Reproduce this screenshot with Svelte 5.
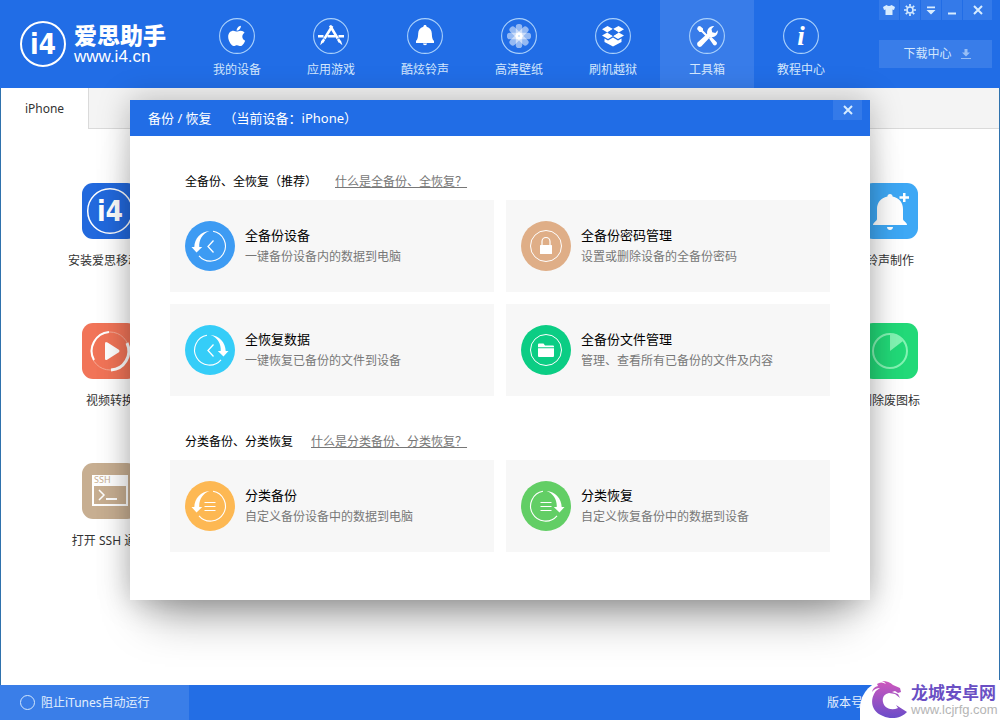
<script lang="ts">
	interface NavItem {
		id: string;
		label: string;
	}

	interface Action {
		icon: string;
		color: string;
		title: string;
		text: string;
	}

	interface Section {
		title: string;
		help: string;
		actions: Action[];
	}

	const nav: NavItem[] = [
		{ id: 'device', label: '我的设备' },
		{ id: 'apps', label: '应用游戏' },
		{ id: 'ringtones', label: '酷炫铃声' },
		{ id: 'wallpaper', label: '高清壁纸' },
		{ id: 'flash', label: '刷机越狱' },
		{ id: 'toolbox', label: '工具箱' },
		{ id: 'guide', label: '教程中心' }
	];

	const tools = [
		{ id: 'install', label: '安装爱思移动端', side: 'first' },
		{ id: 'ringtone', label: '铃声制作', side: 'last' },
		{ id: 'video', label: '视频转换', side: 'first' },
		{ id: 'clean', label: '删除废图标', side: 'last' },
		{ id: 'ssh', label: '打开 SSH 通道', side: 'first' }
	];

	const sections: Section[] = [
		{
			title: '全备份、全恢复（推荐）',
			help: '什么是全备份、全恢复？',
			actions: [
				{ icon: 'backup', color: '#3d9bf3', title: '全备份设备', text: '一键备份设备内的数据到电脑' },
				{ icon: 'lock', color: '#dfae87', title: '全备份密码管理', text: '设置或删除设备的全备份密码' },
				{ icon: 'restore', color: '#35cdf8', title: '全恢复数据', text: '一键恢复已备份的文件到设备' },
				{ icon: 'folder', color: '#0bcd84', title: '全备份文件管理', text: '管理、查看所有已备份的文件及内容' }
			]
		},
		{
			title: '分类备份、分类恢复',
			help: '什么是分类备份、分类恢复？',
			actions: [
				{ icon: 'backup-list', color: '#fdb853', title: '分类备份', text: '自定义备份设备中的数据到电脑' },
				{ icon: 'restore-list', color: '#62ce65', title: '分类恢复', text: '自定义恢复备份中的数据到设备' }
			]
		}
	];

	let active = $state('toolbox');
	let open = $state(true);
	let blockItunes = $state(false);
</script>

{#snippet navIcon(id: string)}
	<svg class="nav-icon" viewBox="0 0 36 36" aria-hidden="true">
		<circle cx="18" cy="18" r="17.4" fill="none" stroke="#a9d0fb" stroke-width="1.1" />
		{#if id === 'device'}
			<path
				transform="translate(9 6.4) scale(.045)"
				d="M318.7 268.7c-.2-36.7 16.4-64.4 50-84.8-18.8-26.9-47.2-41.7-84.7-44.6-35.5-2.8-74.3 20.7-88.5 20.7-15 0-49.4-19.7-76.4-19.7C63.3 141.2 4 184.8 4 273.5q0 39.3 14.4 81.2c12.8 36.7 59 126.7 107.2 125.2 25.2-.6 43-17.9 75.8-17.9 31.8 0 48.3 17.9 76.4 17.9 48.6-.7 90.4-82.5 102.6-119.3-65.2-30.7-61.7-90-61.7-91.9zm-56.6-164.2c27.3-32.4 24.8-61.9 24-72.5-24.1 1.4-52 16.4-67.9 34.9-17.5 19.8-27.8 44.3-25.6 71.9 26.1 2 49.9-11.4 69.5-34.3z"
			/>
		{:else if id === 'apps'}
			<path d="M5 17h5.5v2.4H5zM14.5 17h8v2.4h-8zM25.5 17H31v2.4h-5.5z" />
			<path d="M19.3 8 9.4 24M17 7.5 26.8 24" fill="none" stroke="#fff" stroke-width="2.5" />
			<path d="m8.3 22.5 2.4 1.5-3.5 3.3zM25.6 24l2.3-1.4 1.5 4.6z" />
			<path d="m10.5 20.5 2.6 1.6M23.2 21.7l2.6-1.5" stroke="#216de6" stroke-width=".8" />
		{:else if id === 'ringtones'}
			<path
				d="M18 7c1 0 1.6.7 1.6 1.700 3.500.8 5 3.400 5.200 6.600.2 4.300.6 6 2.200 7.700v2H9v-2c1.600-1.700 2-3.400 2.200-7.700.2-3.200 1.700-5.800 5.200-6.600C16.400 7.700 17 7 18 7zM16 25.500h4c0 1-.9 1.700-2 1.700s-2-.7-2-1.700z"
			/>
		{:else if id === 'wallpaper'}
			{#each [0, 45, 90, 135, 180, 225, 270, 315] as angle}
				<rect
					x="14.8"
					y="6"
					width="6.4"
					height="12"
					rx="2.8"
					fill-opacity=".52"
					transform="rotate({angle} 18 18)"
				/>
			{/each}
			<circle cx="18" cy="18" r="3.5" />
			<circle cx="18" cy="18" r=".8" fill="#9cc6f8" />
		{:else if id === 'flash'}
			<path
				d="m12.500 8 5.500 3-5.700 3.400L7 11.200zM23.500 8 18 11l5.700 3.400 5.300-3.200zM7 17.500l5.300-3 5.700 3.500-5 3zM29 17.500l-5.300-3L18 18l5 3zM9.500 20.500l3.500 2 5-3 5 3 3.500-2V24L18 28.500 9.500 24z"
			/>
			<path d="M12.300 14.400 18 11l5.700 3.400L18 18z" fill="#216de6" />
		{:else if id === 'toolbox'}
			<path
				d="M9 8.500 11 8l3 2.500v2l5 5-1.500 1.500-5-5h-2L8 11zM20 20.500l2-2 5.500 5.500c1.500 2-1 4.500-3 3z"
			/>
			<path
				d="m8.500 24.500 9.700-8.700c-.8-4 2.300-8.300 7-7.800l-2.700 3 .7 3.200 3.200.7 2.300-2.700c.8 4.500-3.400 7.800-7.500 6.800l-9 9.500c-2.500 1.500-5-1.500-3.700-4z"
			/>
		{:else}
			<text x="18" y="27" text-anchor="middle" class="info">i</text>
		{/if}
	</svg>
{/snippet}

{#snippet toolIcon(id: string)}
	{#if id === 'install'}
		<svg class="tool-icon" viewBox="0 0 56 56" aria-hidden="true">
			<rect width="56" height="56" rx="11" fill="#2269dd" />
			<circle cx="28" cy="28" r="22.3" fill="none" stroke="#fff" stroke-width="1.5" />
			<text x="28" y="38" text-anchor="middle" class="mark">i4</text>
		</svg>
	{:else if id === 'ringtone'}
		<svg class="tool-icon" viewBox="0 0 56 56" aria-hidden="true">
			<rect width="56" height="56" rx="11" fill="#3ea8f5" />
			<path
				d="M28 11c1.600 0 2.500 1 2.600 2.600C37.500 15 41 20 41 26v10c0 2 4 3.500 4 6H11c0-2.500 4-4 4-6V26c0-6 3.500-11 10.400-12.400C25.500 12 26.400 11 28 11zM25 44h6c0 4-6 4-6 0zM41 10h2.500v3.200H47v2.600h-3.500V19H41v-3.200h-3.500v-2.600H41z"
				fill="#fff"
			/>
		</svg>
	{:else if id === 'video'}
		<svg class="tool-icon" viewBox="0 0 56 56" aria-hidden="true">
			<rect width="56" height="56" rx="11" fill="#f17458" />
			<circle cx="28" cy="28" r="19" fill="none" stroke="#f6a995" />
			<path d="M27 9a19 19 0 0 0-15 28" fill="none" stroke="#fff" stroke-width="2" />
			<path d="M29 47a19 19 0 0 0 16-27" fill="none" stroke="#fff" stroke-width="3" />
			<path d="M23 20.500q0-2.500 2.500-1l11 7q2 1.500 0 3l-11 7q-2.500 1.500-2.500-1z" fill="#fff" />
		</svg>
	{:else if id === 'clean'}
		<svg class="tool-icon" viewBox="0 0 56 56" aria-hidden="true">
			<rect width="56" height="56" rx="11" fill="#22d978" />
			<circle cx="28" cy="28" r="17" fill="none" stroke="#83f3b3" stroke-width="2" />
			<path d="M28 28V11q8 0 13 7z" fill="#83f3b3" />
		</svg>
	{:else}
		<svg class="tool-icon" viewBox="0 0 56 56" aria-hidden="true">
			<rect width="56" height="56" rx="11" fill="#c7ae91" />
			<path d="M11 22v20h34V22" fill="none" stroke="#fff" stroke-width="2" />
			<rect x="10" y="12" width="36" height="11" fill="#fff" />
			<text x="12" y="20" class="ssh">SSH</text>
			<path d="m17 27 5 5-5 5" fill="none" stroke="#fff" stroke-width="1.5" />
			<path d="M24 36h11" stroke="#fff" stroke-width="2" />
		</svg>
	{/if}
{/snippet}

{#snippet actionIcon(icon: string, color: string)}
	<svg class="action-icon" viewBox="0 0 50 50" aria-hidden="true">
		<circle cx="25" cy="25" r="25" fill={color} />
		{#if icon === 'lock' || icon === 'folder'}
			<circle cx="25" cy="25" r="15.5" fill="none" stroke="#fff" />
		{:else}
			<g transform={icon.startsWith('restore') ? 'translate(50 0) scale(-1 1)' : undefined}>
				<path d="M28 10.300a15 15 0 1 1-14 24.500" fill="none" stroke="#fff" stroke-width="1.1" />
				<path d="M24.500 10C16 10.500 9.500 17.500 9.300 26H6.500l5 5.500 5.700-5.500h-2.900c-.6-7 3.200-13.500 10.200-16z" fill="#fff" />
			</g>
		{/if}
		{#if icon === 'lock'}
			<rect x="19" y="24" width="12" height="9" rx=".5" fill="#fff" />
			<path d="M21 24v-3.500a4 4 0 0 1 8 0V24" fill="none" stroke="#fff" stroke-width="1.2" />
		{:else if icon === 'folder'}
			<path d="M17 19.500q0-1 1-1h4.500l1.500 2h8q1 0 1 1v.8H17zM17 23.300h16V31q0 1-1 1H18q-1 0-1-1z" fill="#fff" />
		{:else if icon.endsWith('list')}
			<path d="M19.500 21.500h11M19.500 25.500h11M19.500 29.500h11" stroke="#fff" />
		{:else}
			<path d="m28.500 19.500-5.500 6 5.500 6" fill="none" stroke="#fff" stroke-width="1.3" />
		{/if}
	</svg>
{/snippet}

<div class="app">
	<header class="topbar">
		<div class="brand">
			<svg class="logo" viewBox="0 0 46 46" aria-hidden="true">
				<circle cx="23" cy="23" r="22" fill="none" stroke="#fff" stroke-width="2" />
				<text x="23" y="33" text-anchor="middle" class="mark">i4</text>
			</svg>
			<div class="brand-text">
				<strong>爱思助手</strong>
				<span>www.i4.cn</span>
			</div>
		</div>

		<nav>
			{#each nav as item (item.id)}
				<button
					type="button"
					class="nav-item"
					class:active={active === item.id}
					onclick={() => (active = item.id)}
				>
					{@render navIcon(item.id)}
					<span>{item.label}</span>
				</button>
			{/each}
		</nav>

		<div class="window">
			<div class="controls">
				<button type="button" aria-label="皮肤">
					<svg viewBox="0 0 12 12"><path d="M3.500 1q2.500 2 5 0L12 3l-1 3-1.500-.5V11h-7V5.500L1 6 0 3z" /></svg>
				</button>
				<button type="button" aria-label="设置">
					<svg viewBox="0 0 12 12">
						<circle cx="6" cy="6" r="3" fill="none" stroke="#d7ecff" stroke-width="1.6" />
						<path
							d="M6 0v2.500M6 9.500V12M0 6h2.500M9.500 6H12M1.800 1.800l1.700 1.700M8.500 8.500l1.700 1.700M1.800 10.200l1.700-1.700M8.500 3.500l1.700-1.700"
							stroke="#d7ecff"
							stroke-width="1.7"
						/>
					</svg>
				</button>
				<button type="button" aria-label="菜单">
					<svg viewBox="0 0 12 12"><path d="M2 2.500h8v1.800H2zM1.500 6h9L6 10.500z" /></svg>
				</button>
				<button type="button" aria-label="最小化">
					<svg viewBox="0 0 12 12"><path d="M2 8.500h8v2H2z" /></svg>
				</button>
				<button type="button" class="wide" aria-label="关闭">
					<svg viewBox="0 0 12 12"><path d="m2 2 8 8M10 2l-8 8" stroke="#d7ecff" stroke-width="2" /></svg>
				</button>
			</div>
			<button type="button" class="download">
				下载中心
				<svg viewBox="0 0 12 12" aria-hidden="true"><path d="M4.500 1h3v3.500H10l-4 4-4-4h2.500zM1 10h10v1H1z" /></svg>
			</button>
		</div>
	</header>

	<main>
		<div class="tabs">
			<button type="button" class="tab">iPhone</button>
		</div>
		<div class="tools">
			{#each tools as tool (tool.id)}
				<button type="button" class="tool {tool.side}">
					{@render toolIcon(tool.id)}
					<span>{tool.label}</span>
				</button>
			{/each}
		</div>
	</main>

	<footer>
		<label>
			<input type="checkbox" bind:checked={blockItunes} />
			阻止iTunes自动运行
		</label>
		<span class="version">版本号</span>
	</footer>

	{#if open}
		<div class="overlay">
			<div class="dialog" role="dialog" aria-labelledby="dialog-title">
				<div class="dialog-head">
					<h1 id="dialog-title">
						<span>备份 / 恢复</span>
						<span>（当前设备：iPhone）</span>
					</h1>
					<button type="button" aria-label="关闭" onclick={() => (open = false)}>
						<svg viewBox="0 0 12 12"><path d="m2 2 8 8M10 2l-8 8" stroke="#d7ecff" stroke-width="2" /></svg>
					</button>
				</div>
				<div class="dialog-body">
					{#each sections as section (section.title)}
						<section>
							<div class="section-head">
								<h2>{section.title}</h2>
								<a href="#help">{section.help}</a>
							</div>
							<div class="cards">
								{#each section.actions as action (action.title)}
									<button type="button" class="card">
										{@render actionIcon(action.icon, action.color)}
										<span class="card-text">
											<span class="card-title">{action.title}</span>
											<span class="card-desc">{action.text}</span>
										</span>
									</button>
								{/each}
							</div>
						</section>
					{/each}
				</div>
			</div>
		</div>
	{/if}

	<div class="watermark">
		<svg viewBox="0 0 38 38" aria-hidden="true">
			<defs>
				<linearGradient id="dragon" x1="0" y1="0" x2="0" y2="1">
					<stop offset="0" stop-color="#cf58bd" />
					<stop offset="1" stop-color="#6a4cc9" />
				</linearGradient>
			</defs>
			<path
				d="M6 3q4-3 9 0-1-2-4-3 7 0 11 4l7 3 1 4-3 1-3-2-3 1 6 2 2 4-5-4-6-1c-5 1-7 5-6 9 1 6 8 9 15 6l-2-3 11 7c-5 6-16 8-24 4C1 31-1 21 3 13q2-4 6-6Q4 7 1 11 2 6 7 5z"
				fill="url(#dragon)"
			/>
		</svg>
		<div>
			<strong>龙城安卓网</strong>
			<span>www.lcjrfg.com</span>
		</div>
	</div>
</div>

<style>
	:global(body) {
		margin: 0;
		background: #fff;
	}

	.app {
		position: relative;
		display: flex;
		flex-direction: column;
		min-height: 100vh;
		overflow: hidden;
		color: #333;
		font: 12px/20px 'Noto Sans', 'Noto Sans CJK SC', sans-serif;
	}

	button {
		padding: 0;
		border: 0;
		color: inherit;
		background: none;
		font: inherit;
		cursor: pointer;
	}

	svg {
		display: block;
		flex: none;
	}

	.topbar {
		display: flex;
		height: 88px;
		color: #d3e7fd;
		background: #216de6;
	}

	.brand {
		display: flex;
		box-sizing: border-box;
		flex: none;
		gap: 8px;
		align-items: center;
		width: 190px;
		padding-left: 20px;
		color: #fff;
	}

	.logo {
		width: 46px;
		height: 46px;
	}

	.mark {
		fill: #fff;
		font: bold 28px 'DejaVu Sans Condensed', sans-serif;
	}

	.brand-text {
		display: flex;
		flex-direction: column;
	}

	.brand-text strong {
		font-size: 23px;
		font-weight: 900;
		line-height: 26px;
	}

	.brand-text span {
		font: 17px/18px 'Liberation Sans', sans-serif;
	}

	nav {
		display: flex;
	}

	.nav-item {
		display: flex;
		flex-direction: column;
		gap: 6px;
		align-items: center;
		width: 94px;
		padding-top: 18px;
	}

	.nav-item.active {
		background: #387ce9;
	}

	.nav-icon {
		width: 36px;
		height: 36px;
		fill: #fff;
	}

	.info {
		font: italic bold 27px 'Liberation Serif', serif;
	}

	.window {
		display: flex;
		flex-direction: column;
		gap: 20px;
		width: 113px;
		margin: 0 8px 0 auto;
	}

	.controls {
		display: flex;
		gap: 1px;
	}

	.controls button,
	.dialog-head button {
		display: grid;
		flex: 1;
		height: 20px;
		background: #347ae9;
		place-items: center;
	}

	.controls .wide {
		flex: none;
		width: 29px;
	}

	.controls svg,
	.download svg,
	.dialog-head svg {
		width: 12px;
		height: 12px;
		fill: #d7ecff;
	}

	.download {
		display: flex;
		gap: 8px;
		align-items: center;
		justify-content: center;
		height: 28px;
		padding-left: 4px;
		background: #397de9;
	}

	.download svg {
		opacity: 0.6;
	}

	main {
		flex: 1;
		border: solid #2f72ad;
		border-width: 0 1px;
	}

	.tabs {
		display: flex;
		height: 40px;
		border-bottom: 1px solid #dadada;
		background: #f4f4f4;
	}

	.tab {
		width: 88px;
		height: 41px;
		border-right: 1px solid #dadada;
		background: #fff;
	}

	.tools {
		display: grid;
		grid-template-columns: repeat(5, 84px);
		row-gap: 52px;
		justify-content: space-between;
		padding: 54px 67px 0;
	}

	.tool {
		display: flex;
		flex-direction: column;
		gap: 12px;
		align-items: center;
		white-space: nowrap;
	}

	.tool.first {
		grid-column: 1;
	}

	.tool.last {
		grid-column: 5;
	}

	.tool-icon {
		width: 56px;
		height: 56px;
	}

	.ssh {
		fill: #c7ae91;
		font: 9px 'Noto Sans', sans-serif;
	}

	footer {
		display: flex;
		justify-content: space-between;
		height: 35px;
		color: #e2effd;
		background: #236ee5;
		line-height: 35px;
	}

	footer label {
		display: flex;
		box-sizing: border-box;
		gap: 6px;
		align-items: center;
		width: 189px;
		padding-left: 20px;
		background: #3a7ee8;
	}

	footer input {
		width: 15px;
		height: 15px;
		margin: 0;
		border: 1px solid #d3e7fd;
		border-radius: 50%;
		appearance: none;
	}

	footer input:checked {
		background: #d3e7fd;
	}

	.version {
		padding-right: 137px;
	}

	.overlay {
		position: absolute;
		display: flex;
		align-items: flex-start;
		justify-content: center;
		padding-top: 100px;
		inset: 0;
	}

	.dialog {
		width: 74%;
		background: #fff;
		box-shadow:
			0 0 30px rgba(0, 0, 0, 0.26),
			0 34px 44px -20px rgba(0, 0, 0, 0.36);
	}

	.dialog-head {
		display: flex;
		justify-content: space-between;
		height: 36px;
		padding: 0 8px 0 18px;
		color: #fff;
		background: #216de6;
	}

	h1 {
		display: flex;
		gap: 12px;
		margin: 0;
		font-size: 13px;
		font-weight: 400;
		line-height: 36px;
	}

	.dialog-head button {
		flex: none;
		width: 29px;
	}

	.dialog-body {
		display: grid;
		gap: 36px;
		padding: 36px 40px 48px;
	}

	.section-head {
		display: flex;
		gap: 18px;
		padding: 0 15px 8px;
	}

	h2 {
		margin: 0;
		color: #000;
		font-size: 12px;
		font-weight: 400;
	}

	.section-head a {
		color: #777;
	}

	.cards {
		display: grid;
		grid-template-columns: repeat(2, 1fr);
		gap: 12px;
	}

	.card {
		display: flex;
		gap: 10px;
		align-items: center;
		padding: 21px 15px;
		background: #f7f7f7;
		text-align: left;
	}

	.action-icon {
		width: 50px;
		height: 50px;
	}

	.card-text {
		display: flex;
		flex-direction: column;
		line-height: 22px;
	}

	.card-title {
		color: #000;
		font-size: 13px;
	}

	.card-desc {
		color: #777;
	}

	/* partner badge over the lower right corner */
	.watermark {
		position: absolute;
		right: 0;
		bottom: 0;
		display: flex;
		box-sizing: border-box;
		gap: 2px;
		align-items: center;
		width: 140px;
		height: 40px;
		padding-left: 11px;
		border-top-left-radius: 28px;
		background: #fff;
	}

	.watermark svg {
		width: 38px;
		height: 38px;
	}

	.watermark div {
		display: flex;
		flex-direction: column;
	}

	.watermark strong {
		color: #6a4fc4;
		font-size: 17px;
		line-height: 18px;
	}

	.watermark span {
		color: #b5b5b5;
		font: 13px/15px 'Liberation Sans', sans-serif;
	}
</style>
